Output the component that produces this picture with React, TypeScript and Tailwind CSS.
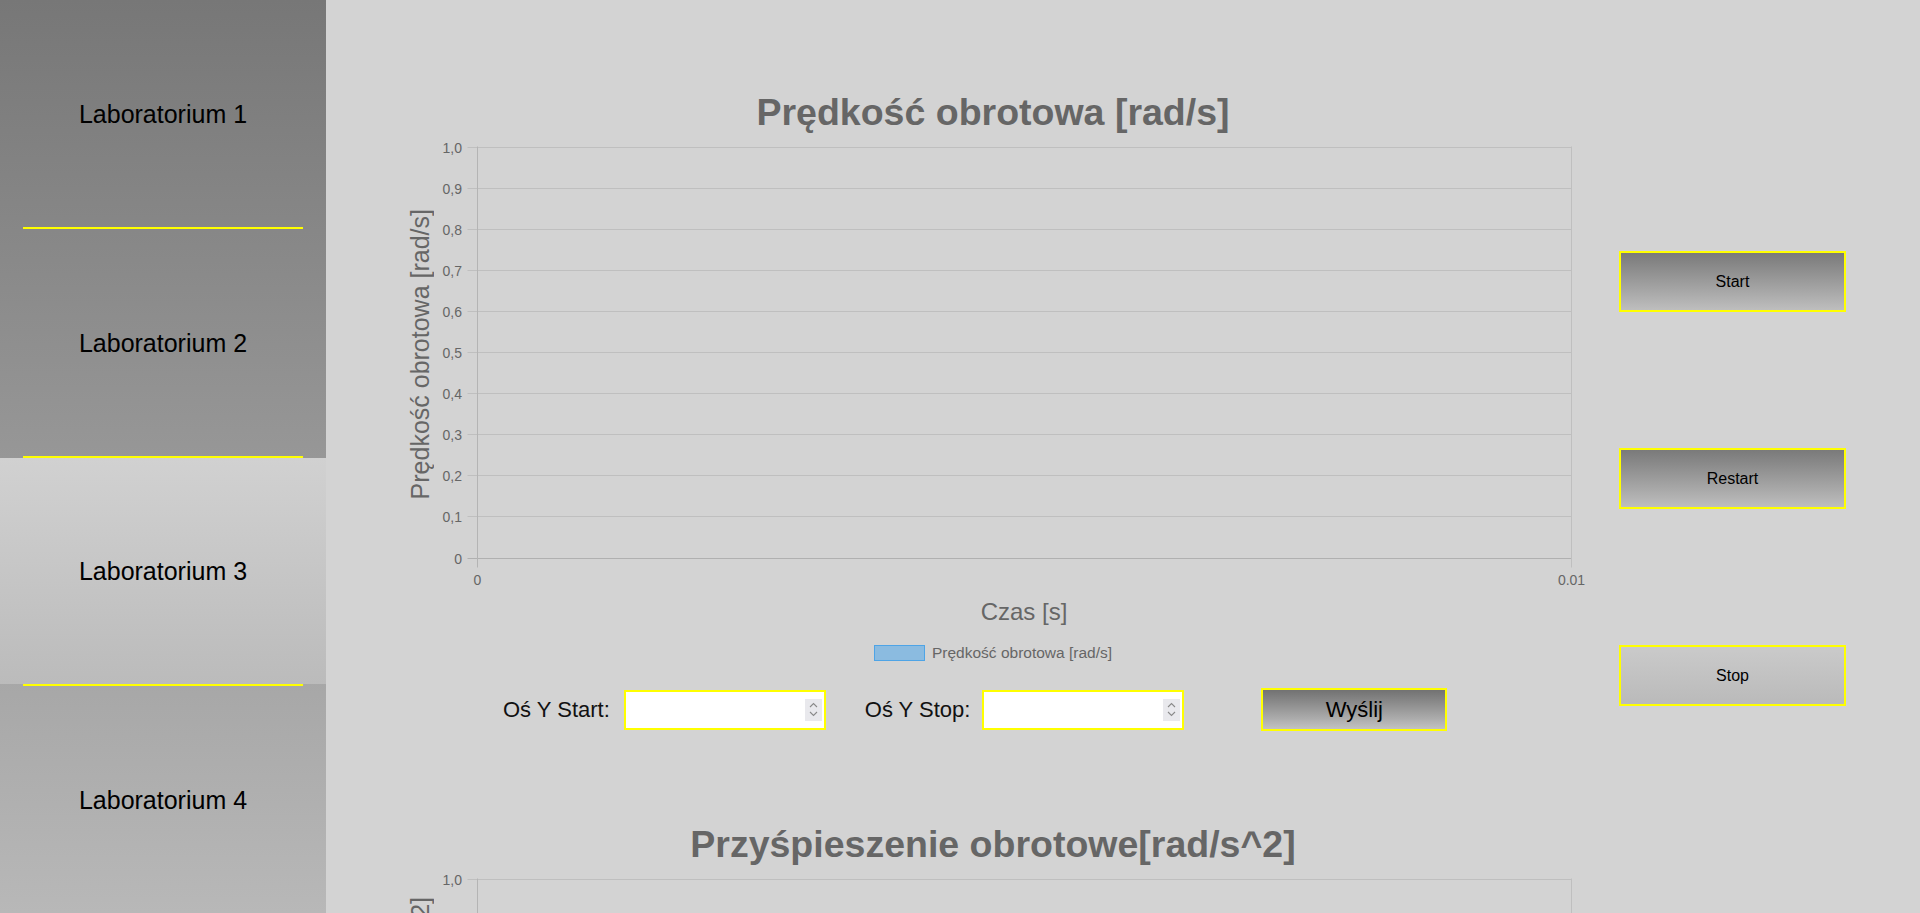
import React from "react";

const labs = ["Laboratorium 1", "Laboratorium 2", "Laboratorium 3", "Laboratorium 4"];

function Sidebar() {
  return (
    <aside className="flex h-full w-[326px] shrink-0 flex-col bg-linear-to-b from-[#777777] to-[#b8b8b8]">
      {labs.map((name, i) => (
        <React.Fragment key={name}>
          <div
            className={
              "flex flex-1 items-center justify-center pt-[2px] text-[25px] leading-none text-black " +
              (i === 2 ? "bg-linear-to-b from-[#d1d1d1] to-[#bbbbbb]" : "")
            }
          >
            {name}
          </div>
          {i < labs.length - 1 && <div className="h-[2px] w-[86%] shrink-0 self-center bg-[#ffff00]" />}
        </React.Fragment>
      ))}
    </aside>
  );
}

// siatka wykresu + podpisy osi (pusty wykres, jak w chart.js)
function Plot() {
  const W = 1146;
  const H = 454;
  const x0 = 37.5;
  const x1 = 1131.5;
  const y0 = 10.5;
  const y1 = 421.5;
  const step = (y1 - y0) / 10;
  const rows = Array.from({ length: 11 }, (_, i) => i);

  return (
    <svg width={W} height={H} className="block shrink-0" fontFamily="'Liberation Sans', Arial, sans-serif">
      {rows.map((i) => {
        const y = Math.round(y0 + i * step) + 0.5;
        const v = (10 - i) / 10;
        const label = i === 10 ? "0" : v.toFixed(1).replace(".", ",");
        return (
          <g key={i}>
            <line x1={x0 - 10} x2={x1} y1={y} y2={y} stroke={i === 10 ? "#b0b0b0" : "#bfbfbf"} strokeWidth={1} />
            <text x={22} y={y + 5} textAnchor="end" fontSize={14} fill="#666">
              {label}
            </text>
          </g>
        );
      })}
      <line x1={x0} x2={x0} y1={y0} y2={y1 + 10} stroke="#b4b4b4" strokeWidth={1} />
      <line x1={x1} x2={x1} y1={y0} y2={y1 + 10} stroke="#bfbfbf" strokeWidth={1} />
      <text x={x0} y={449} textAnchor="middle" fontSize={14} fill="#666">
        0
      </text>
      <text x={x1} y={449} textAnchor="middle" fontSize={14} fill="#666">
        0.01
      </text>
    </svg>
  );
}

function Chart({ title, axisTitle, legend }: { title: string; axisTitle: string; legend: string }) {
  return (
    <div className="flex flex-col">
      <h2 className="h-[36px] whitespace-nowrap text-center text-[37.5px] font-bold leading-[36px] text-[#666]">{title}</h2>
      <div className="mt-[6px] flex">
        <div className="flex w-[40px] shrink-0 items-center justify-center pb-[17px]">
          <span className="rotate-180 whitespace-nowrap text-[25px] leading-none text-[#666] [writing-mode:vertical-rl]">
            {axisTitle}
          </span>
        </div>
        <Plot />
      </div>
      <div className="mt-[10px] pl-[62px] text-center text-[24px] leading-none text-[#666]">Czas [s]</div>
      <div className="mt-[21px] flex h-[16px] items-center justify-center">
        <span className="h-[16px] w-[51px] border border-[#4ea4e6] bg-[#8bbbe0]" />
        <span className="ml-[7px] text-[15.5px] leading-none text-[#666]">{legend}</span>
      </div>
    </div>
  );
}

function NumberBox() {
  return (
    <div className="flex h-[40px] w-[202px] self-start border-2 border-[#ffff00] bg-white">
      <input type="text" className="min-w-0 flex-1 bg-transparent px-2 text-[16px] outline-none" />
      <span className="mr-[2px] flex h-[22px] w-[17px] flex-col items-center justify-center self-center bg-[#e9e9ed]">
        <svg width="9" height="6" viewBox="0 0 9 6" className="mb-[3px]">
          <path d="M1 5 4.5 1.5 8 5" fill="none" stroke="#8a8a8a" strokeWidth="1.1" />
        </svg>
        <svg width="9" height="6" viewBox="0 0 9 6">
          <path d="M1 1 4.5 4.5 8 1" fill="none" stroke="#8a8a8a" strokeWidth="1.1" />
        </svg>
      </span>
    </div>
  );
}

function AxisForm() {
  return (
    <div className="mt-[27px] flex h-[43px] items-center pl-[103px] text-[22px] leading-none text-[#111]">
      <span>Oś Y Start:</span>
      <div className="ml-[14px] flex">
        <NumberBox />
      </div>
      <span className="ml-[39px]">Oś Y Stop:</span>
      <div className="ml-[12px] flex">
        <NumberBox />
      </div>
      <button className="ml-[77px] h-[43px] w-[186px] border-2 border-[#ffff00] bg-linear-to-b from-[#727272] to-[#c2c2c2] text-[22px] leading-none text-black">
        Wyślij
      </button>
    </div>
  );
}

function SideButton({ label, light }: { label: string; light?: boolean }) {
  return (
    <button
      className={
        "h-[61px] w-[227px] border-2 border-[#ffff00] text-[16px] leading-none text-black " +
        (light ? "bg-linear-to-b from-[#cacaca] to-[#bababa]" : "bg-linear-to-b from-[#7a7a7a] to-[#bebebe]")
      }
    >
      {label}
    </button>
  );
}

export default function App() {
  return (
    <div className="flex h-screen w-full overflow-hidden bg-[#d3d3d3] font-['Liberation_Sans',Arial,sans-serif]">
      <Sidebar />
      <main className="flex flex-1">
        <section className="ml-[74px] flex w-[1186px] shrink-0 flex-col pt-[94px]">
          <Chart
            title="Prędkość obrotowa [rad/s]"
            axisTitle="Prędkość obrotowa [rad/s]"
            legend="Prędkość obrotowa [rad/s]"
          />
          <AxisForm />
          <div className="mt-[95px]">
            <Chart
              title="Przyśpieszenie obrotowe[rad/s^2]"
              axisTitle="Przyśpieszenie obrotowe [rad/s^2]"
              legend="Przyśpieszenie obrotowe [rad/s^2]"
            />
          </div>
        </section>
        <div className="ml-[33px] flex w-[227px] shrink-0 flex-col gap-[136px] pt-[251px]">
          <SideButton label="Start" />
          <SideButton label="Restart" />
          <SideButton label="Stop" light />
        </div>
      </main>
    </div>
  );
}
